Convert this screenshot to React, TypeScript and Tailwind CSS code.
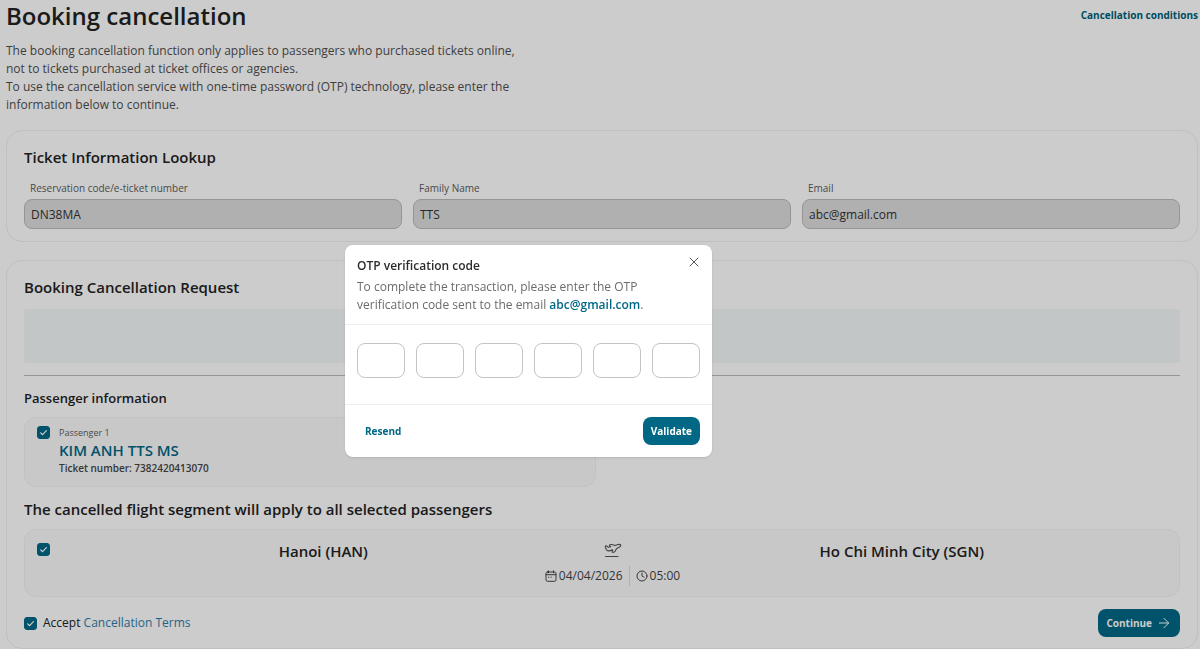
import { useId } from "react";
import type { InputHTMLAttributes, ReactNode } from "react";
import { ArrowRight, X } from "lucide-react";

function LookupField({ label, value, type = "text" }: { label: string; value: string; type?: string }) {
  const id = useId();
  return (
    <div className="flex flex-col">
      <label htmlFor={id} className="px-1.5 text-[10px] leading-4 text-[#5c5c5c]">
        {label}
      </label>
      <input
        id={id}
        type={type}
        defaultValue={value}
        readOnly
        className="mt-[3px] h-[30px] w-full rounded-lg border border-[#bbbbbb] bg-[#dcdcdc] px-1.5 text-xs text-[#333333] outline-none"
      />
    </div>
  );
}

function CheckBox(props: InputHTMLAttributes<HTMLInputElement>) {
  return (
    <span className="grid size-[13px] shrink-0">
      <input
        type="checkbox"
        defaultChecked
        className="peer col-start-1 row-start-1 size-[13px] appearance-none rounded-[3px] border border-[#006885] bg-white checked:bg-[#006885]"
        {...props}
      />
      <svg
        viewBox="0 0 13 13"
        className="pointer-events-none col-start-1 row-start-1 size-[13px] opacity-0 peer-checked:opacity-100"
        fill="none"
        stroke="white"
        strokeWidth="1.2"
        strokeLinecap="round"
        strokeLinejoin="round"
      >
        <path d="M3.7 6.9 5.6 8.7 9.4 4.7" />
      </svg>
    </span>
  );
}

function PlaneIcon() {
  return (
    <svg
      viewBox="0 0 18 15"
      className="h-[15px] w-[18px]"
      fill="none"
      stroke="#555555"
      strokeWidth="1.1"
      strokeLinecap="round"
      strokeLinejoin="round"
    >
      <path d="M1.2 3.5C1.4 2.6 2.4 2.5 3 3.2L4.3 4.2 6.8 3.6 5.7 2.9C5.1 2.3 5.6 1.7 6.4 1.6 7.6 1.4 9.5 1.9 10.9 2.6L13.1 1.8C15 1.1 16.8 1.3 16.8 2.3 16.8 3.6 15.6 4.3 14.2 4.8L12.6 5.4 11.1 8.3C10.6 9.3 8.6 9.8 8.3 9 8 8.3 8.6 7.5 8.7 6.9L6.2 7.6C4.4 8.1 3 7.9 2.2 6.4Z" />
      <path d="M1.5 13.5h12.5" />
    </svg>
  );
}

function CalendarIcon() {
  return (
    <svg viewBox="0 0 12 12" className="size-3" fill="none" stroke="#444444" strokeWidth="1" strokeLinecap="round">
      <rect x="1" y="2" width="10" height="9.3" rx="1.5" />
      <path d="M1 4.7h10M3.5.8v2M8.5.8v2M3.5 7.2h.3M6 7.2h.3" />
    </svg>
  );
}

function ClockIcon() {
  return (
    <svg viewBox="0 0 12 12" className="size-3" fill="none" stroke="#444444" strokeWidth="1" strokeLinecap="round">
      <circle cx="6" cy="6" r="5" />
      <path d="M6 3v3l2 1.2" />
    </svg>
  );
}

function Card({ children, className }: { children: ReactNode; className: string }) {
  return <section className={`rounded-2xl border border-[#f0f0f0] px-[17px] pt-3.5 ${className}`}>{children}</section>;
}

function OtpDialog() {
  return (
    <div className="fixed inset-0 flex items-center justify-center bg-black/20 pt-[53px] pr-[143px]">
      <div role="dialog" aria-modal="true" aria-labelledby="otp-title" className="w-[367px] rounded-lg bg-white shadow-sm">
        <header className="flex items-start justify-between border-b border-[#eeeeee] px-3 pt-3 pb-2.5">
          <div>
            <h2 id="otp-title" className="text-xs leading-[18px] font-semibold text-[#2b2b2b]">
              OTP verification code
            </h2>
            <p className="mt-[3px] max-w-[300px] text-xs leading-[18px] text-[#6b6b6b]">
              To complete the transaction, please enter the OTP verification code sent to the email{" "}
              <strong className="font-semibold text-[#006885]">abc@gmail.com</strong>.
            </p>
          </div>
          <button type="button" aria-label="Close" className="-mt-[3px] -mr-0.5 text-[#555555]">
            <X className="size-4" strokeWidth={1.5} />
          </button>
        </header>
        <div className="grid grid-cols-6 gap-[11px] px-3 pt-[18px] pb-[26px]">
          {[1, 2, 3, 4, 5, 6].map((digit) => (
            <input
              key={digit}
              aria-label={`Digit ${digit}`}
              inputMode="numeric"
              maxLength={1}
              className="h-[35px] w-full rounded-lg border border-[#c4c4c4] bg-white text-center text-sm outline-none"
            />
          ))}
        </div>
        <footer className="flex items-center justify-between border-t border-[#eeeeee] p-3">
          <button type="button" className="h-7 px-2 text-[10px] font-bold text-[#006885]">
            Resend
          </button>
          <button type="button" className="h-7 rounded-lg bg-[#006885] px-2 text-[10px] font-bold text-white">
            Validate
          </button>
        </footer>
      </div>
    </div>
  );
}

export default function App() {
  return (
    <div className="min-h-screen bg-white font-['Open_Sans',sans-serif] text-[#222222]">
      <main className="pr-0.5 pl-1.5">
        <header className="flex items-start justify-between">
          <h1 className="text-2xl leading-8 font-semibold">Booking cancellation</h1>
          <a href="#conditions" className="mt-[7px] text-[10px] leading-4 font-bold text-[#006078]">
            Cancellation conditions
          </a>
        </header>
        <p className="mt-2.5 max-w-[510px] text-xs leading-[18px] text-[#4f4f4f]">
          The booking cancellation function only applies to passengers who purchased tickets online, not to tickets
          purchased at ticket offices or agencies.
          <br />
          To use the cancellation service with one-time password (OTP) technology, please enter the information below to
          continue.
        </p>

        <Card className="mt-4 pb-3">
          <h2 className="text-[15px] leading-6 font-semibold">Ticket Information Lookup</h2>
          <div className="mt-[11px] grid grid-cols-3 gap-[11px]">
            <LookupField label="Reservation code/e-ticket number" value="DN38MA" />
            <LookupField label="Family Name" value="TTS" />
            <LookupField label="Email" value="abc@gmail.com" type="email" />
          </div>
        </Card>

        <Card className="mt-[18px] pb-[11px]">
          <h2 className="text-[15px] leading-6 font-semibold">Booking Cancellation Request</h2>
          <div className="mt-2.5 h-[54px] rounded-[4px] bg-[#f3f8f9]" />
          <hr className="mt-3 border-[#bbbbbb]" />
          <h3 className="mt-3 text-[13px] leading-5 font-semibold">Passenger information</h3>
          <div className="mt-[9px] grid grid-cols-2 gap-3">
            <label className="flex items-start gap-[9px] rounded-xl border border-[#f2f2f2] bg-[#fafafa] px-3 pt-2 pb-2.5">
              <CheckBox aria-label="Passenger 1" />
              <span className="flex flex-col">
                <span className="text-[9px] leading-[14px] text-[#5c5c5c]">Passenger 1</span>
                <span className="text-[15px] leading-5 font-semibold text-[#006885]">KIM ANH TTS MS</span>
                <span className="text-[10px] leading-4 font-semibold text-[#444444]">Ticket number: 7382420413070</span>
              </span>
            </label>
          </div>
          <h3 className="mt-2.5 text-[15px] leading-6 font-semibold">
            The cancelled flight segment will apply to all selected passengers
          </h3>
          <div className="mt-2 flex items-start rounded-xl border border-[#f2f2f2] bg-[#fafafa] px-3 pt-[9px] pb-2.5">
            <div className="pt-1">
              <CheckBox aria-label="Hanoi to Ho Chi Minh City" />
            </div>
            <div className="ml-2 grid grow grid-cols-[1fr_48px_1fr] justify-items-center">
              <span className="text-[15px] leading-6 font-semibold">Hanoi (HAN)</span>
              <span className="pt-1">
                <PlaneIcon />
              </span>
              <span className="text-[15px] leading-6 font-semibold">Ho Chi Minh City (SGN)</span>
              <div className="col-span-3 mt-[3px] flex items-center text-xs leading-5 text-[#444444]">
                <CalendarIcon />
                <time className="ml-0.5 border-r border-[#dddddd] pr-1.5">04/04/2026</time>
                <span className="ml-1.5 flex items-center gap-0.5">
                  <ClockIcon />
                  05:00
                </span>
              </div>
            </div>
          </div>
          <footer className="mt-3 flex items-center justify-between">
            <div className="flex items-center gap-1.5 text-xs">
              <CheckBox id="accept" />
              <span>
                <label htmlFor="accept">Accept</label>{" "}
                <a href="#terms" className="text-[#2c7ea8]">
                  Cancellation Terms
                </a>
              </span>
            </div>
            <button
              type="button"
              className="flex h-7 items-center gap-1 rounded-lg bg-[#006885] px-2 text-[10px] font-bold text-white"
            >
              Continue
              <ArrowRight className="size-4" strokeWidth={1.5} />
            </button>
          </footer>
        </Card>
      </main>
      <OtpDialog />
    </div>
  );
}
